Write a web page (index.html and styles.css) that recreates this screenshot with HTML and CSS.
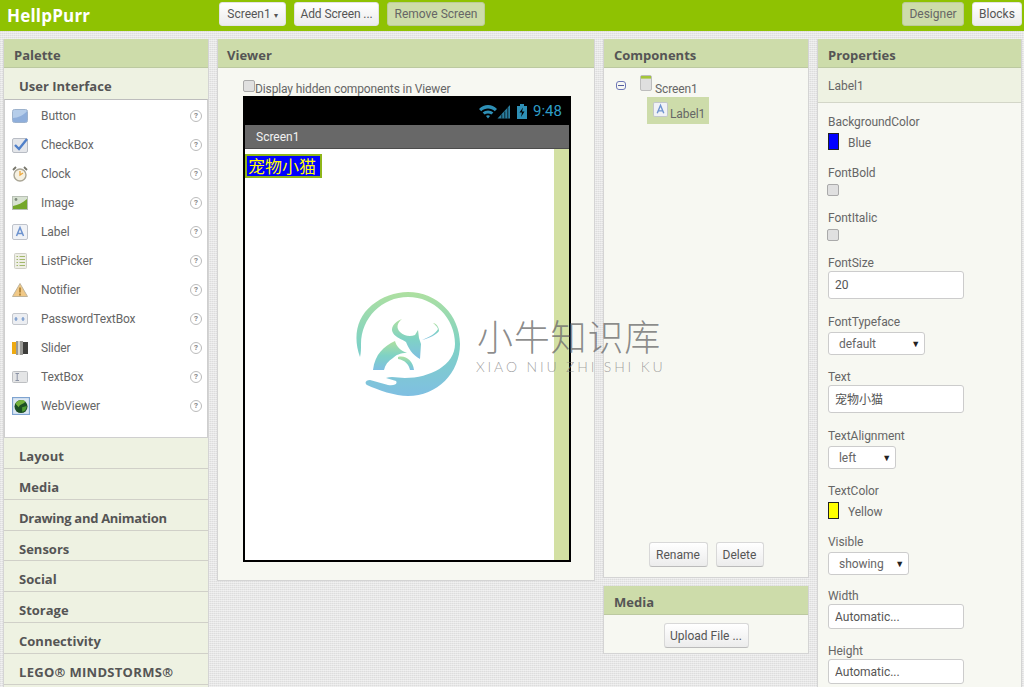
FILE: index.html
```html
<!DOCTYPE html>
<html lang="en">
<head>
<meta charset="utf-8">
<title>HellpPurr</title>
<link rel="stylesheet" href="styles.css">
</head>
<body>
<header class="topbar">
  <div class="app-title">HellpPurr</div>
  <div class="top-left">
    <button class="btn top-btn w-screen">Screen1 <span class="mini-caret">▾</span></button>
    <button class="btn top-btn w-add">Add Screen ...</button>
    <button class="btn top-btn btn-on w-remove">Remove Screen</button>
  </div>
  <div class="top-right">
    <button class="btn top-btn btn-on w-designer">Designer</button>
    <button class="btn top-btn w-blocks">Blocks</button>
  </div>
</header>

<main class="workspace">
  <section class="panel palette">
    <h2 class="panel-head">Palette</h2>
    <h3 class="stack-head stack-open">User Interface</h3>
    <ul class="palette-list">
      <li class="pal-item"><svg class="pal-icon" viewBox="0 0 16 16"><rect x="0.5" y="1.5" width="15" height="13" rx="2" fill="#b5cdea" stroke="#9db2cc"/><path d="M1 10 C6 10 12 7 15 3 V13 Q15 14 14 14 H2 Q1 14 1 13Z" fill="#8eaedb"/></svg><span class="pal-name">Button</span><span class="help">?</span></li>
      <li class="pal-item"><svg class="pal-icon" viewBox="0 0 16 16"><rect x="0.5" y="1.5" width="15" height="14" rx="1.5" fill="#e4e6ea" stroke="#b8bcc4"/><path d="M3 8 L7 12 L15 2" fill="none" stroke="#4f7fc9" stroke-width="2.4"/></svg><span class="pal-name">CheckBox</span><span class="help">?</span></li>
      <li class="pal-item"><svg class="pal-icon" viewBox="0 0 16 16"><circle cx="8" cy="9" r="6" fill="#f6f1e2" stroke="#a9a595" stroke-width="1.4"/><path d="M8 5 V9 L11 7" fill="none" stroke="#eda63a" stroke-width="1.3"/><path d="M1 4 L4 1 M15 4 L12 1" stroke="#77766c" stroke-width="1.8"/></svg><span class="pal-name">Clock</span><span class="help">?</span></li>
      <li class="pal-item"><svg class="pal-icon" viewBox="0 0 16 16"><rect x="0.5" y="1.5" width="15" height="13" fill="#d8e2d2" stroke="#b8c0b5"/><path d="M1 14 V11 C6 10 10 8 15 4 V14Z" fill="#74a72a"/><circle cx="4" cy="4.5" r="1.4" fill="#7f8c7c"/></svg><span class="pal-name">Image</span><span class="help">?</span></li>
      <li class="pal-item"><svg class="pal-icon" viewBox="0 0 16 16"><rect x="0.5" y="0.5" width="15" height="15" rx="1.5" fill="#f0f2f6" stroke="#bfc3cb"/><path d="M4.5 12 L8 3.5 L11.5 12 M6 9.5 H10" fill="none" stroke="#6d93cf" stroke-width="1.5"/></svg><span class="pal-name">Label</span><span class="help">?</span></li>
      <li class="pal-item"><svg class="pal-icon" viewBox="0 0 16 16"><rect x="2.5" y="0.5" width="12" height="15" rx="1" fill="#eeeee6" stroke="#cfcfc6"/><path d="M4.5 3.5 H6 M7.5 3.5 H13 M4.5 6.5 H6 M7.5 6.5 H13 M4.5 9.5 H6 M7.5 9.5 H13 M4.5 12.5 H6 M7.5 12.5 H13" stroke="#a3b86c"/></svg><span class="pal-name">ListPicker</span><span class="help">?</span></li>
      <li class="pal-item"><svg class="pal-icon" viewBox="0 0 16 16"><path d="M8 1.5 L15.5 14.5 H0.5Z" fill="#f1c987" stroke="#bfb49c"/><path d="M8 5.5 V10.5 M8 11.5 V13.5" stroke="#a77a2e" stroke-width="1.6"/></svg><span class="pal-name">Notifier</span><span class="help">?</span></li>
      <li class="pal-item"><svg class="pal-icon" viewBox="0 0 16 16"><rect x="0.5" y="2.5" width="15" height="11" rx="1.5" fill="#eceef2" stroke="#c4c7cd"/><path d="M4 6 V10 M2.4 8 H5.6 M11 6 V10 M9.4 8 H12.6" stroke="#6e93c8" stroke-width="1.2"/></svg><span class="pal-name">PasswordTextBox</span><span class="help">?</span></li>
      <li class="pal-item"><svg class="pal-icon" viewBox="0 0 16 16"><rect x="0" y="2" width="5" height="12" fill="#eeaa12"/><rect x="4" y="1" width="7" height="14" fill="#9a9a96"/><rect x="6" y="1" width="2" height="14" fill="#d8d8d4"/><rect x="11" y="2" width="5" height="12" fill="#3e3e3c"/></svg><span class="pal-name">Slider</span><span class="help">?</span></li>
      <li class="pal-item"><svg class="pal-icon" viewBox="0 0 16 16"><rect x="0.5" y="2.5" width="15" height="11" rx="1" fill="#e4e5e6" stroke="#bdbfc2"/><path d="M3.5 4.5 H7 M5.2 4.5 V11.5 M3.5 11.5 H7" fill="none" stroke="#8b93a6"/></svg><span class="pal-name">TextBox</span><span class="help">?</span></li>
      <li class="pal-item"><svg class="pal-icon pal-icon-web" viewBox="0 0 16 16"><rect x="0.5" y="0.5" width="15" height="15" fill="#dbe6f3" stroke="#7ea3d0"/><circle cx="8" cy="8.5" r="5.8" fill="#1c4f24"/><path d="M3 6 C5 2 10 2 12 4 C10 7 7 6 6 9 C5 8 4 7 3 6Z" fill="#72b13c"/><path d="M9 9 L13 8 C13 11 11 13 9 13Z" fill="#4d9a33"/></svg><span class="pal-name">WebViewer</span><span class="help">?</span></li>
    </ul>
    <h3 class="stack-head">Layout</h3>
    <h3 class="stack-head">Media</h3>
    <h3 class="stack-head stack-tight">Drawing and Animation</h3>
    <h3 class="stack-head stack-short">Sensors</h3>
    <h3 class="stack-head">Social</h3>
    <h3 class="stack-head">Storage</h3>
    <h3 class="stack-head">Connectivity</h3>
    <h3 class="stack-head stack-wide">LEGO® MINDSTORMS®</h3>
  </section>

  <section class="panel viewer">
    <h2 class="panel-head head-narrow">Viewer</h2>
    <div class="viewer-body">
      <label class="hidden-toggle"><input class="check" type="checkbox">Display hidden components in Viewer</label>
      <div class="phone">
        <div class="status-bar">
          <svg class="status-icons" viewBox="0 0 48 15" width="48" height="15">
            <path d="M0 5 C5 -0.5 13 -0.5 18 5 L15.8 7.3 C12 3.6 6 3.6 2.2 7.3Z M3.6 8.6 C6.5 5.8 11.5 5.8 14.4 8.6 L12.4 10.6 C10.5 9 7.5 9 5.6 10.6Z M7 12 C8 11 10 11 11 12 L9 14.5Z" fill="#2e8fb5"/>
            <path d="M18.5 14.5 L31 1 V14.5Z" fill="#2a7d9e"/>
            <path d="M22.5 14.5 h0.7 v-4 h-0.7Z M25.5 14.5 h0.7 v-7 h-0.7Z M28.5 14.5 h0.7 v-11 h-0.7Z" fill="#000"/>
            <path d="M38 2 h3 v-2 h4 v2 h3 v13 h-10Z" fill="#2e8fb5"/>
            <path d="M44 3.5 L40.5 8.5 H43 L42 13 L45.5 7.5 H43Z" fill="#000"/>
          </svg>
          <span class="clock-time">9:48</span>
        </div>
        <div class="title-bar">Screen1</div>
        <div class="form">
          <div class="form-content">
            <div class="label-box">宠物小猫</div>
          </div>
          <div class="form-scroll"></div>
        </div>
      </div>
    </div>
  </section>

  <div class="col-mid">
    <section class="panel components">
      <h2 class="panel-head">Components</h2>
      <div class="comp-body">
        <div class="tree">
          <div class="tree-root">
            <span class="tree-toggle"></span>
            <svg class="tree-icon" viewBox="0 0 12 16"><rect x="0.5" y="0.5" width="11" height="15" rx="1.5" fill="#dfdfdf" stroke="#bdbdbd"/><rect x="1" y="1" width="10" height="2.6" fill="#a4c639"/></svg>
            <span class="tree-text">Screen1</span>
          </div>
          <div class="tree-child">
            <svg class="tree-icon-a" viewBox="0 0 16 16"><rect x="0.5" y="0.5" width="15" height="15" rx="1.5" fill="#f0f2f6" stroke="#bfc3cb"/><path d="M4.5 12 L8 3.5 L11.5 12 M6 9.5 H10" fill="none" stroke="#6d93cf" stroke-width="1.5"/></svg>
            <span class="tree-text">Label1</span>
          </div>
        </div>
        <div class="comp-actions">
          <button class="btn act-btn w-rename">Rename</button>
          <button class="btn act-btn w-delete">Delete</button>
        </div>
      </div>
    </section>
    <section class="panel media">
      <h2 class="panel-head">Media</h2>
      <div class="media-body"><button class="btn act-btn w-upload">Upload File ...</button></div>
    </section>
  </div>

  <section class="panel properties">
    <h2 class="panel-head">Properties</h2>
    <div class="prop-sub">Label1</div>
    <div class="prop-list">
      <div class="prop prop-color"><div class="prop-label">BackgroundColor</div><div class="color-value"><span class="swatch swatch-blue"></span><span class="color-name">Blue</span></div></div>
      <div class="prop prop-check"><div class="prop-label">FontBold</div><input class="check prop-box" type="checkbox"></div>
      <div class="prop prop-check"><div class="prop-label">FontItalic</div><input class="check prop-box" type="checkbox"></div>
      <div class="prop prop-text"><div class="prop-label">FontSize</div><input class="field field-tall" type="text" value="20"></div>
      <div class="prop prop-select"><div class="prop-label">FontTypeface</div><div class="select w-typeface"><span>default</span><span class="caret">▼</span></div></div>
      <div class="prop prop-text"><div class="prop-label">Text</div><input class="field field-tall field-cjk" type="text" value="宠物小猫"></div>
      <div class="prop prop-select"><div class="prop-label">TextAlignment</div><div class="select w-align"><span>left</span><span class="caret">▼</span></div></div>
      <div class="prop prop-color"><div class="prop-label">TextColor</div><div class="color-value"><span class="swatch swatch-yellow"></span><span class="color-name">Yellow</span></div></div>
      <div class="prop prop-visible"><div class="prop-label">Visible</div><div class="select w-visible"><span>showing</span><span class="caret">▼</span></div></div>
      <div class="prop prop-size"><div class="prop-label">Width</div><input class="field" type="text" value="Automatic..."></div>
      <div class="prop prop-size"><div class="prop-label">Height</div><input class="field" type="text" value="Automatic..."></div>
    </div>
  </section>
</main>

<div class="watermark">
  <svg class="wm-logo" viewBox="355 291 106 106" width="106" height="106">
    <defs><linearGradient id="wmg" x1="0" y1="0" x2="0" y2="1"><stop offset="0" stop-color="#aee0a0"/><stop offset="0.5" stop-color="#7fd2c4"/><stop offset="1" stop-color="#7fbfe2"/></linearGradient></defs>
    <g fill="url(#wmg)">
      <path d="M360 357 C353 338 356 318 372 305 C382 297 395 292 408 292 C437 292 460 315 460 344 C460 373 437 396 408 396 C395 396 378 390 367 385 C364 383 366 380 370 380 L388 385 C394 386 398 384 396 381 L386 378 C392 376 398 378 405 378 C430 378 455 365 455 344 C455 318 434 297 408 297 C382 297 361 318 361 344 C361 349 361 353 360 357Z"/>
      <path d="M402 319 C394 322 390 328 393 333 C396 338 402 339 406 342 C408 347 412 355 420 359 L421 344 L419 338 L418 330 L415 335 C410 337 404 336 400 332 C396 328 397 323 402 319Z"/>
      <path d="M373 370 C375 354 384 346 395 341 C396 346 401 351 407 353 C400 353 396 355 393 358 C388 361 385 365 384 370Z"/>
      <path d="M398 357 C406 355 413 361 414 370 L410 370 C409 365 405 360 398 359Z"/>
      <path d="M422 340 C430 337 436 333 438 329 C437 326 435 325 433 323 C436 323 439 327 439 331 C436 335 430 338 422 340Z"/>
    </g>
  </svg>
  <div class="wm-text">
    <div class="wm-cn">小牛知识库</div>
    <div class="wm-en">XIAO NIU ZHI SHI KU</div>
  </div>
</div>
</body>
</html>
```

FILE: styles.css
```css
* { box-sizing: border-box; }

html, body {
  margin: 0;
  height: 687px;
  overflow: hidden;
}

body {
  position: relative;
  font-family: Roboto, "Liberation Sans", "Noto Sans CJK SC", sans-serif;
  font-size: 12px;
  color: #555;
  background-color: #e6e6e6;
  background-image:
    repeating-linear-gradient(0deg, rgba(255,255,255,0.45) 0 1px, transparent 1px 2px),
    repeating-linear-gradient(90deg, rgba(0,0,0,0.04) 0 1px, transparent 1px 2px);
}

/* Top bar */
.topbar {
  display: flex;
  align-items: flex-start;
  height: 31px;
  background: #8fc202;
  padding: 2px 2px 0 7px;
}

.app-title {
  width: 212px;
  color: #fff;
  font-family: "Open Sans", sans-serif;
  font-weight: 700;
  font-size: 17px;
  letter-spacing: 0.2px;
  line-height: 27px;
}

.top-left { display: flex; gap: 8px; flex: 1; }
.top-right { display: flex; gap: 8px; }

.btn {
  height: 25px;
  padding: 0;
  border: 1px solid #d8d8d8;
  border-bottom-color: #bbb;
  border-radius: 3px;
  background: linear-gradient(#fff, #ececec);
  color: #555;
  font-family: Roboto, "Liberation Sans", sans-serif;
  font-size: 12px;
}

.top-btn { height: 24px; border-color: #e3e3e3; }
.btn-on { background: #cddcaa; border-color: #bccb98; color: #666; }
.mini-caret { font-size: 8px; }
.w-screen { width: 67px; }
.w-add { width: 85px; letter-spacing: -0.1px; }
.w-remove { width: 98px; }
.w-designer { width: 62px; }
.w-blocks { width: 50px; }
.w-rename { width: 59px; }
.w-delete { width: 48px; }
.w-upload { width: 85px; }

/* Columns */
.workspace {
  display: flex;
  align-items: flex-start;
  padding: 8px 2px 0 3px;
}

.panel {
  background: #f7f8f2;
  border: 1px solid #d4d4d4;
  border-top: 0;
}

.panel-head {
  margin: 0;
  height: 29px;
  padding-left: 10px;
  background: #cddcaa;
  border-bottom: 1px solid #bcc9a0;
  font-family: "Open Sans", sans-serif;
  font-size: 13px;
  font-weight: 700;
  line-height: 32px;
  color: #555;
}

.head-narrow { padding-left: 9px; }

/* Palette */
.palette {
  width: 206px;
  height: 660px;
  margin-right: 8px;
  background: #eef2e2;
  flex: none;
}

.stack-head {
  margin: 0;
  height: 31px;
  padding: 4px 0 0 15px;
  border-bottom: 1px solid #d0d0c8;
  background: #eef2e2;
  font-family: "Open Sans", sans-serif;
  font-size: 13px;
  font-weight: 700;
  line-height: 28px;
  color: #555;
}

.stack-open { border-bottom: 0; }
.stack-short { height: 30px; }
.stack-tight { letter-spacing: -0.3px; }
.stack-wide { letter-spacing: 0.3px; }

.palette-list {
  list-style: none;
  margin: 0;
  padding: 1px 0 0;
  height: 339px;
  background: #fff;
  border: 1px solid #cfcfcf;
  border-top-color: #bdbdbd;
}

.pal-item {
  display: flex;
  align-items: center;
  height: 29px;
  padding: 0 5px 0 7px;
}

.pal-icon { width: 16px; height: 16px; flex: none; }
.pal-icon-web { width: 18px; height: 20px; margin-right: -2px; }
.pal-name { flex: 1; margin-left: 13px; color: #666; letter-spacing: -0.1px; }

.help {
  display: block;
  width: 12px;
  height: 12px;
  border: 1px solid #bbb;
  border-radius: 50%;
  font-size: 8px;
  font-weight: 700;
  line-height: 10px;
  text-align: center;
  color: #888;
}

/* Viewer */
.viewer {
  width: 378px;
  height: 542px;
  margin-right: 8px;
  flex: none;
}

.viewer-body { padding: 12px 0 0 25px; }

.hidden-toggle {
  display: flex;
  align-items: flex-start;
  height: 16px;
  color: #666;
  letter-spacing: -0.12px;
  line-height: 18px;
}

.check {
  appearance: none;
  -webkit-appearance: none;
  width: 12px;
  height: 12px;
  margin: 0;
  border: 1px solid #aaa;
  border-radius: 2px;
  background: #e0e0e0;
  flex: none;
}

.phone {
  width: 328px;
  height: 466px;
  border: 2px solid #000;
  border-top-width: 1px;
  background: #fff;
  display: flex;
  flex-direction: column;
}

.status-bar {
  display: flex;
  align-items: center;
  justify-content: flex-end;
  height: 28px;
  padding: 0 7px 0 0;
  background: #000;
  flex: none;
}

.status-icons { margin-right: 6px; }
.clock-time { font-size: 15px; color: #2e9cc5; width: 29px; white-space: nowrap; }

.title-bar {
  height: 24px;
  padding-left: 11px;
  background: #686868;
  border-bottom: 1px solid #4c4c4c;
  color: #f2f2f2;
  line-height: 24px;
  flex: none;
}

.form { display: flex; flex: 1; }
.form-content { flex: 1; padding-top: 5px; }
.form-scroll { width: 15px; background: #d3e0a3; }

.label-box {
  width: 77px;
  height: 24px;
  padding-left: 1px;
  border: 2px solid #8fb61a;
  background: #0000ff;
  color: #ffff00;
  font-family: "Noto Sans CJK SC", sans-serif;
  font-size: 17px;
  line-height: 20px;
  white-space: nowrap;
}

/* Components and Media */
.col-mid { width: 206px; margin-right: 8px; flex: none; }

.components { height: 539px; }

.comp-body {
  display: flex;
  flex-direction: column;
  justify-content: space-between;
  height: 509px;
  padding: 7px 0 10px;
}

.tree { position: relative; }

.tree-root {
  display: flex;
  align-items: flex-start;
  height: 22px;
  padding-left: 12px;
}

.tree-toggle {
  position: relative;
  width: 10px;
  height: 9px;
  margin-top: 6px;
  border: 1px solid #6f78b8;
  border-radius: 3px;
}

.tree-toggle::before {
  content: "";
  position: absolute;
  left: 1px;
  top: 3px;
  width: 6px;
  height: 1px;
  background: #555f9e;
}

.tree-icon { width: 12px; height: 16px; margin: 0 0 0 14px; }
.tree-text { margin-left: 3px; padding-top: 7px; color: #666; letter-spacing: -0.1px; }

.tree-child {
  display: flex;
  align-items: flex-start;
  width: 62px;
  height: 27px;
  margin: 0 0 0 43px;
  padding: 5px 0 0 6px;
  background: #cddcaa;
}

.tree-icon-a { width: 15px; height: 15px; flex: none; }
.tree-child .tree-text { margin-left: 2px; padding-top: 5px; }

.comp-actions { display: flex; justify-content: center; gap: 8px; }

.media { margin-top: 8px; height: 68px; }
.media-body { display: flex; justify-content: center; padding-top: 8px; }
.act-btn { height: 25px; }

/* Properties */
.properties { width: 205px; height: 660px; flex: none; }

.prop-sub {
  height: 35px;
  padding-left: 10px;
  background: #eef2e2;
  border-bottom: 1px solid #d3d6c8;
  color: #666;
  line-height: 37px;
}

.prop-list { padding: 10px 0 0 10px; }
.prop { color: #666; letter-spacing: -0.05px; }
.prop-label { height: 16px; line-height: 18px; }
.prop-color { height: 51px; }
.prop-check { height: 45px; }
.prop-text { height: 59px; }
.prop-select { height: 55px; }
.prop-visible { height: 54px; }
.prop-size { height: 55px; }

.color-value {
  display: flex;
  align-items: center;
  gap: 9px;
  height: 17px;
  margin-top: 4px;
}

.color-name { padding-top: 2px; }
.swatch { width: 11px; height: 17px; border: 1px solid #222; }
.swatch-blue { background: #0000ff; }
.swatch-yellow { background: #ffff00; }

.prop-box { display: block; margin: 4px 0 0 -1px; }

.field {
  display: block;
  width: 136px;
  height: 25px;
  margin-top: 1px;
  padding: 0 6px;
  border: 1px solid #ccc;
  border-radius: 3px;
  background: #fff;
  color: #555;
  font-family: Roboto, "Noto Sans CJK SC", sans-serif;
  font-size: 12px;
}

.field-tall { height: 28px; }
.field-cjk { padding-bottom: 2px; }

.select {
  display: flex;
  align-items: center;
  justify-content: space-between;
  height: 23px;
  margin-top: 3px;
  padding: 0 4px 0 10px;
  border: 1px solid #ccc;
  border-radius: 3px;
  background: #fff;
}

.caret { font-size: 9px; color: #222; }
.w-typeface { width: 97px; }
.w-align { width: 68px; }
.w-visible { width: 81px; }

/* Watermark over the page */
.watermark {
  position: absolute;
  left: 355px;
  top: 291px;
  display: flex;
  pointer-events: none;
}

.wm-text { padding-top: 21px; width: 200px; margin-left: 15px; }

.wm-cn {
  font-family: "Noto Sans CJK SC", sans-serif;
  font-weight: 300;
  font-size: 36px;
  line-height: 46px;
  letter-spacing: 0.8px;
  color: rgba(110,110,110,0.8);
  margin-left: 1px;
  white-space: nowrap;
}

.wm-en {
  font-family: Lato, sans-serif;
  font-weight: 300;
  font-size: 14px;
  letter-spacing: 2.85px;
  line-height: 16px;
  margin-top: 1px;
  color: rgba(130,130,130,0.75);
  white-space: nowrap;
}
```
